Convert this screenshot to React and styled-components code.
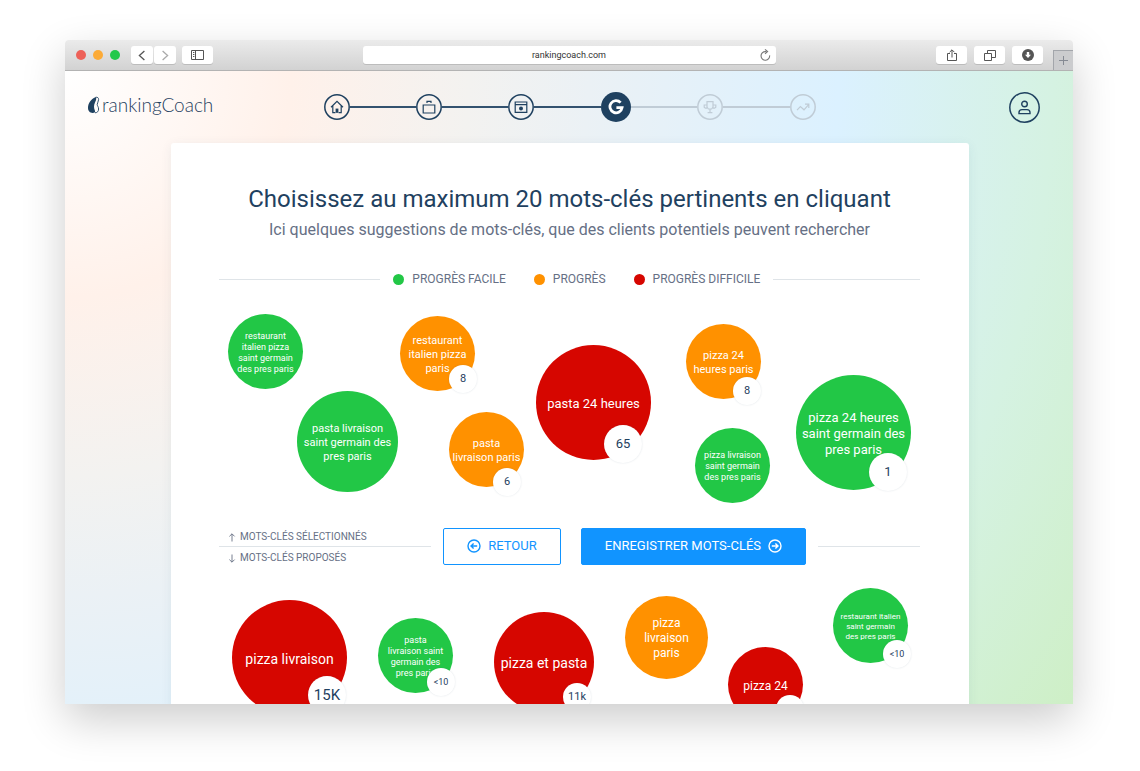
import React, { useState } from "react";
import styled, { createGlobalStyle } from "styled-components";

const colors = {
  navy: "#1f4160",
  grey: "#667085",
  pending: "#c0ccd6",
  line: "#dfe4e8",
  blue: "#1194ff",
  easy: "#22c746",
  medium: "#ff9100",
  hard: "#d60600",
};

const GlobalStyle = createGlobalStyle`
  * {
    box-sizing: border-box;
  }

  body {
    margin: 0;
    background: #fff;
    font-family: Roboto, "Liberation Sans", sans-serif;
    color: ${colors.navy};
  }

  button, input {
    font-family: inherit;
    padding: 0;
    border: 0;
  }

  button {
    cursor: pointer;
  }

  svg {
    display: block;
    fill: none;
    stroke: currentColor;
  }
`;

const Page = styled.div`
  height: 100vh;
  padding: 40px 67px 67px 65px;
  overflow: hidden;
`;

const BrowserWindow = styled.div`
  height: 100%;
  display: flex;
  flex-direction: column;
  border-radius: 4px 4px 0 0;
  box-shadow: 0 16px 44px rgba(0, 0, 0, 0.2);
`;

/* browser chrome */

const Chrome = styled.div`
  flex: none;
  height: 31px;
  display: grid;
  grid-template-columns: 1fr minmax(0, 413px) 1fr;
  align-items: center;
  background: linear-gradient(#ebebeb, #d2d2d2);
  border-bottom: 1px solid #b3b3b3;
  border-radius: 4px 4px 0 0;
`;

const ChromeLeft = styled.div`
  display: flex;
  align-items: center;
  padding-left: 11px;
`;

const ChromeRight = styled.div`
  height: 30px;
  display: flex;
  align-items: center;
  justify-content: flex-end;
  gap: 7px;
`;

const WindowDot = styled.span`
  width: 10px;
  height: 10px;
  margin-right: 7px;
  border-radius: 50%;
  background: ${(props) => props.$color};
`;

const ChromeButton = styled.button`
  width: ${(props) => (props.$narrow ? "22px" : "31px")};
  height: 18px;
  display: flex;
  align-items: center;
  justify-content: center;
  background: #fff;
  border-radius: 3px;
  box-shadow: 0 1px 0 rgba(0, 0, 0, 0.12);
  color: ${(props) => props.$color || "#555"};
`;

const NavButtons = styled.div`
  display: flex;
  gap: 1px;
  margin: 0 6px 0 4px;
`;

const AddressBar = styled.div`
  height: 18px;
  display: flex;
  align-items: center;
  padding: 0 5px 0 16px;
  background: #fff;
  border-radius: 3px;
  box-shadow: 0 1px 0 rgba(0, 0, 0, 0.12);
`;

const AddressInput = styled.input`
  flex: 1;
  min-width: 0;
  background: transparent;
  font-size: 9px;
  text-align: center;
  color: #333;
  outline: none;
`;

const ReloadButton = styled.button`
  background: transparent;
  color: #777;
`;

const NewTab = styled.button`
  align-self: flex-end;
  width: 20px;
  height: 20px;
  margin-left: 3px;
  display: flex;
  align-items: center;
  justify-content: center;
  background: #cbccce;
  border-top: 1px solid #a3a6ab;
  border-left: 1px solid #a3a6ab;
  color: #858a93;
`;

/* app */

const Viewport = styled.div`
  flex: 1;
  min-height: 0;
  display: flex;
  flex-direction: column;
  overflow: hidden;
  background: radial-gradient(
    circle farthest-corner at 0 0,
    #fff 0%,
    #fff1ea 19%,
    #f3f2f0 34%,
    #ebf1f5 44%,
    #dbf1ff 65%,
    #d5f2e2 83%,
    #ceefc6 100%
  );
`;

const Header = styled.header`
  flex: none;
  height: 72px;
  display: grid;
  grid-template-columns: 1fr minmax(0, 492px) 1fr;
  align-items: center;
  padding: 0 21px 0 22px;
`;

const Logo = styled.a`
  display: flex;
  align-items: center;
  gap: 2px;
  padding-bottom: 4px;
  font-family: Lato, "Open Sans", sans-serif;
  font-size: 19px;
  font-weight: 300;
  line-height: 24px;
  text-decoration: none;
  color: ${colors.navy};
`;

const Steps = styled.nav`
  display: flex;
  align-items: center;
`;

const Step = styled.button`
  flex: none;
  border-radius: 50%;
  background: ${(props) => (props.$active ? colors.navy : "transparent")};
  color: ${(props) =>
    props.$active ? "#fff" : props.$pending ? colors.pending : colors.navy};
`;

const StepLine = styled.span`
  flex: 1;
  height: 2px;
  background: ${(props) => (props.$pending ? colors.pending : "#33526f")};
`;

const Account = styled.button`
  justify-self: end;
  margin-right: 12px;
  border-radius: 50%;
  background: transparent;
  color: ${colors.navy};
`;

const Main = styled.main`
  flex: 1;
  min-height: 0;
  padding: 0 104px 0 106px;
`;

const Card = styled.section`
  padding: 40px 49px 0 48px;
  background: #fff;
  border-radius: 3px 3px 0 0;
  box-shadow: 0 2px 12px rgba(31, 65, 96, 0.07);
`;

const Title = styled.h1`
  margin: 0;
  font-size: 24px;
  font-weight: 400;
  line-height: 32px;
  text-align: center;
  white-space: nowrap;
`;

const Subtitle = styled.p`
  margin: 3px 0 29px;
  font-size: 16px;
  line-height: 24px;
  text-align: center;
  white-space: nowrap;
  color: ${colors.grey};
`;

const Rule = styled.span`
  flex: ${(props) => props.$grow || 1};
  height: 1px;
  background: ${colors.line};
`;

const Legend = styled.div`
  height: 16px;
  display: flex;
  align-items: center;
`;

const LegendList = styled.ul`
  display: flex;
  gap: 28px;
  margin: 0 13px;
  padding: 0;
  list-style: none;
`;

const LegendItem = styled.li`
  display: flex;
  align-items: center;
  gap: 8px;
  font-size: 12px;
  line-height: 16px;
  color: ${colors.grey};

  &::before {
    content: "";
    width: 11px;
    height: 11px;
    border-radius: 50%;
    background: ${(props) => colors[props.$level]};
  }
`;

/* bubbles float freely, their x is kept as a share of the board width */
const BOARD_WIDTH = 701;

const Board = styled.div`
  position: relative;
  height: 241px;
`;

const BubbleButton = styled.button`
  position: absolute;
  left: ${(props) => (props.$x / BOARD_WIDTH) * 100}%;
  top: ${(props) => props.$y}px;
  width: ${(props) => props.$size}px;
  height: ${(props) => props.$size}px;
  display: flex;
  align-items: center;
  justify-content: center;
  padding-top: 2px;
  border-radius: 50%;
  background: ${(props) => colors[props.$level]};
  color: #fff;
  font-size: ${(props) => props.$font}px;
  line-height: ${(props) => props.$leading}px;
  text-align: center;
  white-space: pre;
`;

const Badge = styled.span`
  position: absolute;
  left: ${(props) => props.$x}px;
  top: ${(props) => props.$y}px;
  width: ${(props) => props.$size}px;
  height: ${(props) => props.$size}px;
  border-radius: 50%;
  background: #fff;
  box-shadow: 0 0 2px rgba(31, 65, 96, 0.15);
  color: ${colors.navy};
  font-size: ${(props) => props.$font}px;
  line-height: ${(props) => props.$size}px;
`;

const Actions = styled.div`
  display: flex;
  align-items: flex-start;
`;

const Labels = styled.div`
  flex: 1;
  margin-right: 12px;
`;

const Label = styled.div`
  display: flex;
  align-items: center;
  gap: 4px;
  padding-left: 9px;
  font-size: 10px;
  line-height: 18px;
  color: ${colors.grey};

  &:first-child {
    border-bottom: 1px solid ${colors.line};
  }

  &:last-child {
    margin-top: 2px;
  }
`;

const ActionButtons = styled.div`
  flex: none;
  display: flex;
  gap: 20px;
`;

const ActionButton = styled.button`
  height: 37px;
  display: flex;
  align-items: center;
  gap: 7px;
  padding: 0 23px 1px;
  border: 1px solid ${colors.blue};
  border-radius: 2px;
  background: ${(props) => (props.$primary ? colors.blue : "#fff")};
  color: ${(props) => (props.$primary ? "#fff" : colors.blue)};
  font-size: 13px;
  line-height: 16px;
`;

const ActionsEnd = styled.div`
  width: 102px;
  margin: 18px 0 0 12px;
  display: flex;
`;

const selected = [
  { text: "restaurant\nitalien pizza\nsaint germain\ndes pres paris", level: "easy", x: 9, y: 27, size: 75, font: 9, leading: 11 },
  { text: "pasta livraison\nsaint germain des\npres paris", level: "easy", x: 78, y: 104, size: 101, font: 11, leading: 14 },
  { text: "restaurant\nitalien pizza\nparis", level: "medium", x: 181, y: 29, size: 75, font: 11, leading: 14, badge: { text: "8", x: 49, y: 49, size: 28, font: 11 } },
  { text: "pasta\nlivraison paris", level: "medium", x: 230, y: 125, size: 75, font: 11, leading: 14, badge: { text: "6", x: 44, y: 56, size: 28, font: 11 } },
  { text: "pasta 24 heures", level: "hard", x: 317, y: 58, size: 115, font: 13, leading: 16, badge: { text: "65", x: 68, y: 80, size: 38, font: 13 } },
  { text: "pizza 24\nheures paris", level: "medium", x: 467, y: 37, size: 75, font: 11, leading: 14, badge: { text: "8", x: 47, y: 53, size: 28, font: 11 } },
  { text: "pizza livraison\nsaint germain\ndes pres paris", level: "easy", x: 476, y: 141, size: 75, font: 9, leading: 11 },
  { text: "pizza 24 heures\nsaint germain des\npres paris", level: "easy", x: 577, y: 88, size: 115, font: 13, leading: 16, badge: { text: "1", x: 73, y: 78, size: 38, font: 13 } },
];

const suggested = [
  { text: "pizza livraison", level: "hard", x: 13, y: 33, size: 115, font: 14, leading: 16, badge: { text: "15K", x: 76, y: 76, size: 38, font: 15 } },
  { text: "pasta\nlivraison saint\ngermain des\npres paris", level: "easy", x: 159, y: 51, size: 75, font: 9, leading: 11, badge: { text: "<10", x: 49, y: 50, size: 28, font: 9 } },
  { text: "pizza et pasta", level: "hard", x: 275, y: 45, size: 100, font: 14, leading: 16, badge: { text: "11k", x: 69, y: 71, size: 28, font: 11 } },
  { text: "pizza\nlivraison\nparis", level: "medium", x: 406, y: 29, size: 83, font: 12, leading: 15 },
  { text: "pizza 24", level: "hard", x: 509, y: 80, size: 75, font: 12, leading: 16, badge: { text: "", x: 48, y: 48, size: 28, font: 11 } },
  { text: "restaurant italien\nsaint germain\ndes pres paris", level: "easy", x: 614, y: 21, size: 75, font: 8, leading: 10, badge: { text: "<10", x: 50, y: 52, size: 28, font: 9 } },
];

const LogoMark = () => (
  <svg width="13" height="18" viewBox="0 0 13 18">
    <path d="M8.4 1.2C4 3 1 7.4 1 11.8 1 15 3 17 5.6 17 7.6 17 8.4 16.2 8 15 6.6 11.6 6.8 9.2 8 6.6 9 4.4 10 2 8.4 1.2Z" fill="currentColor" stroke="none" />
    <path d="M8.4 1.4C10.6.8 11.6 1.8 11.6 3.6 11.6 5.6 10.2 6.8 10.2 8.4 10.2 9.8 11.6 10.8 11.6 13 11.6 15.4 10.2 16.8 8 16.8" strokeWidth="0.9" />
  </svg>
);

const HomeIcon = (props) => (
  <svg width="14" height="14" viewBox="0 0 14 14" strokeWidth="1.2" {...props}>
    <path d="M1 7.2 7 1.4l6 5.8M2.8 6v6.6h2.6M11.2 6v6.6H8.6" />
    <path d="M5.6 12.8V8.6h2.8v4.2Z" fill="currentColor" stroke="none" />
  </svg>
);

const BriefcaseIcon = (props) => (
  <svg width="14" height="14" viewBox="0 0 14 14" strokeWidth="1.2" {...props}>
    <path d="M1.2 5h11.6v8H1.2ZM5 3V1.4h4V3" />
  </svg>
);

const WindowIcon = (props) => (
  <svg width="14" height="14" viewBox="0 0 14 14" strokeWidth="1.2" {...props}>
    <path d="M1.2 2h11.6v10.4H1.2ZM1.2 4.6h11.6" />
    <circle cx="7" cy="8.4" r="2" fill="currentColor" stroke="none" />
  </svg>
);

const GoogleIcon = (props) => (
  <svg width="16" height="16" viewBox="0 0 16 16" strokeWidth="2.8" {...props}>
    <path d="M12.6 3.6A6.1 6.1 0 1 0 14.1 8.6H8.4" />
  </svg>
);

const TrophyIcon = (props) => (
  <svg width="14" height="14" viewBox="0 0 14 14" strokeWidth="1.2" {...props}>
    <path d="M4 1.6h6v5.6L8.6 9H5.4L4 7.2ZM7 9v3.4M4.6 12.6h4.8M4 5H1.2v2.2l1.2 1H4M10 5h2.8v2.2l-1.2 1H10" />
  </svg>
);

const ChartIcon = (props) => (
  <svg width="14" height="14" viewBox="0 0 14 14" strokeWidth="1.2" {...props}>
    <path d="M1 10.2 4.4 6.6l3.6 3.2L12.6 4.6M9 4.2h3.8V8" />
  </svg>
);

const UserIcon = (props) => (
  <svg width="15" height="15" viewBox="0 0 15 15" strokeWidth="1.4" {...props}>
    <circle cx="7.5" cy="4" r="2.8" />
    <path d="M2 13.6v-1.2c0-1.8 1.4-2.8 3-2.8h5c1.6 0 3 1 3 2.8v1.2Z" />
  </svg>
);

/* an icon centred in a thin circle */
const RingIcon = ({ size, iconSize, ring = true, icon: Icon }) => (
  <svg width={size} height={size} viewBox={`0 0 ${size} ${size}`}>
    {ring && <circle cx={size / 2} cy={size / 2} r={size / 2 - 0.8} strokeWidth="1.5" />}
    <Icon x={(size - iconSize) / 2} y={(size - iconSize) / 2} />
  </svg>
);

const CircleArrow = ({ right }) => (
  <svg width="14" height="14" viewBox="0 0 14 14" strokeWidth="1.4">
    <circle cx="7" cy="7" r="6" />
    {right ? (
      <path d="M3.8 7h6M7.4 4.4 10 7 7.4 9.6" />
    ) : (
      <path d="M10.2 7h-6M6.6 4.4 4 7l2.6 2.6" />
    )}
  </svg>
);

const SmallArrow = ({ down }) => (
  <svg width="8" height="9" viewBox="0 0 8 9" strokeWidth="0.9">
    {down ? (
      <path d="M4 .5v7.6M1.4 5.6 4 8.2l2.6-2.6" />
    ) : (
      <path d="M4 8.5V.9M1.4 3.4 4 .8l2.6 2.6" />
    )}
  </svg>
);

const steps = [
  { name: "Accueil", icon: HomeIcon },
  { name: "Entreprise", icon: BriefcaseIcon },
  { name: "Site web", icon: WindowIcon },
  { name: "Google", icon: GoogleIcon },
  { name: "Concurrents", icon: TrophyIcon },
  { name: "Statistiques", icon: ChartIcon },
];

const CURRENT_STEP = 3;

function BrowserBar() {
  const [url, setUrl] = useState("rankingcoach.com");

  return (
    <Chrome>
      <ChromeLeft>
        <WindowDot $color="#ed6158" />
        <WindowDot $color="#fcab37" />
        <WindowDot $color="#24c84a" />
        <NavButtons>
          <ChromeButton $narrow aria-label="Back">
            <svg width="8" height="11" viewBox="0 0 8 11" strokeWidth="1.3">
              <path d="M6.4 1 1.4 5.5l5 4.5" />
            </svg>
          </ChromeButton>
          <ChromeButton $narrow $color="#aaa" aria-label="Forward">
            <svg width="8" height="11" viewBox="0 0 8 11" strokeWidth="1.3">
              <path d="m1.6 1 5 4.5-5 4.5" />
            </svg>
          </ChromeButton>
        </NavButtons>
        <ChromeButton aria-label="Sidebar">
          <svg width="13" height="10" viewBox="0 0 13 10" strokeWidth="1">
            <path d="M.5.5h12v9H.5ZM4.5.5v9M2 2.5h1.4M2 4.5h1.4M2 6.5h1.4" />
          </svg>
        </ChromeButton>
      </ChromeLeft>
      <AddressBar>
        <AddressInput
          aria-label="Address"
          value={url}
          onChange={(e) => setUrl(e.target.value)}
        />
        <ReloadButton aria-label="Reload">
          <svg width="11" height="12" viewBox="0 0 11 12" strokeWidth="1.1">
            <path d="M6.4 2.6H5.3A4.3 4.3 0 1 0 9.6 6.4M5 .4l2.6 2.2L5 4.8" />
          </svg>
        </ReloadButton>
      </AddressBar>
      <ChromeRight>
        <ChromeButton aria-label="Share">
          <svg width="10" height="13" viewBox="0 0 10 13" strokeWidth="1">
            <path d="M3 4.5H.5v7h9v-7H7M5 8.5V1M2.6 3.2 5 .8l2.4 2.4" />
          </svg>
        </ChromeButton>
        <ChromeButton aria-label="Tabs">
          <svg width="12" height="11" viewBox="0 0 12 11" strokeWidth="1">
            <path d="M.5 3.5h7v7h-7ZM3.5 3V.5h8v7H8" />
          </svg>
        </ChromeButton>
        <ChromeButton aria-label="Downloads">
          <svg width="12" height="12" viewBox="0 0 12 12">
            <circle cx="6" cy="6" r="6" fill="currentColor" stroke="none" />
            <path d="M4.8 3h2.4v2.8H9L6 9 3 5.8h1.8Z" fill="#fff" stroke="none" />
          </svg>
        </ChromeButton>
        <NewTab aria-label="New tab">
          <svg width="9" height="9" viewBox="0 0 9 9" strokeWidth="1">
            <path d="M4.5 0v9M0 4.5h9" />
          </svg>
        </NewTab>
      </ChromeRight>
    </Chrome>
  );
}

function Bubble({ text, level, x, y, size, font, leading, badge }) {
  return (
    <BubbleButton $level={level} $x={x} $y={y} $size={size} $font={font} $leading={leading}>
      {text}
      {badge && (
        <Badge $x={badge.x} $y={badge.y} $size={badge.size} $font={badge.font}>
          {badge.text}
        </Badge>
      )}
    </BubbleButton>
  );
}

function App() {
  return (
    <>
      <GlobalStyle />
      <Page>
        <BrowserWindow>
          <BrowserBar />
          <Viewport>
            <Header>
              <Logo href="#">
                <LogoMark />
                rankingCoach
              </Logo>
              <Steps>
                {steps.map(({ name, icon }, i) => {
                  const active = i === CURRENT_STEP;
                  const pending = i > CURRENT_STEP;

                  return (
                    <React.Fragment key={name}>
                      {i > 0 && <StepLine $pending={pending} />}
                      <Step aria-label={name} $active={active} $pending={pending}>
                        <RingIcon
                          size={active ? 30 : 26}
                          iconSize={active ? 16 : 14}
                          ring={!active}
                          icon={icon}
                        />
                      </Step>
                    </React.Fragment>
                  );
                })}
              </Steps>
              <Account aria-label="Mon compte">
                <RingIcon size={31} iconSize={15} icon={UserIcon} />
              </Account>
            </Header>
            <Main>
              <Card>
                <Title>Choisissez au maximum 20 mots-clés pertinents en cliquant</Title>
                <Subtitle>
                  Ici quelques suggestions de mots-clés, que des clients potentiels peuvent rechercher
                </Subtitle>
                <Legend>
                  <Rule $grow={11} />
                  <LegendList>
                    <LegendItem $level="easy">PROGRÈS FACILE</LegendItem>
                    <LegendItem $level="medium">PROGRÈS</LegendItem>
                    <LegendItem $level="hard">PROGRÈS DIFFICILE</LegendItem>
                  </LegendList>
                  <Rule $grow={10} />
                </Legend>
                <Board>
                  {selected.map((item) => (
                    <Bubble key={item.text} {...item} />
                  ))}
                </Board>
                <Actions>
                  <Labels>
                    <Label>
                      <SmallArrow />
                      MOTS-CLÉS SÉLECTIONNÉS
                    </Label>
                    <Label>
                      <SmallArrow down />
                      MOTS-CLÉS PROPOSÉS
                    </Label>
                  </Labels>
                  <ActionButtons>
                    <ActionButton>
                      <CircleArrow />
                      RETOUR
                    </ActionButton>
                    <ActionButton $primary>
                      ENREGISTRER MOTS-CLÉS
                      <CircleArrow right />
                    </ActionButton>
                  </ActionButtons>
                  <ActionsEnd>
                    <Rule />
                  </ActionsEnd>
                </Actions>
                <Board>
                  {suggested.map((item) => (
                    <Bubble key={item.text} {...item} />
                  ))}
                </Board>
              </Card>
            </Main>
          </Viewport>
        </BrowserWindow>
      </Page>
    </>
  );
}

export default App;
